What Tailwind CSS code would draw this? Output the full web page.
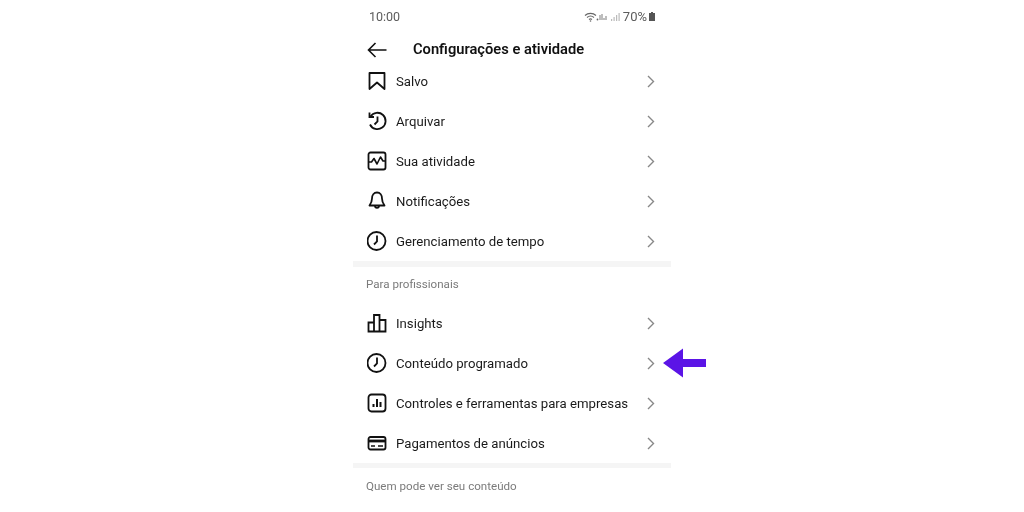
<!DOCTYPE html>
<html lang="en">
<head>
    <meta charset="UTF-8">
    <title>Configurações e atividade</title>
    <script src="https://cdn.jsdelivr.net/npm/@tailwindcss/browser@4"></script>
</head>
<body class="bg-white font-['Roboto',sans-serif] w-[1024px] h-[512px] overflow-hidden relative">
    <div class="w-[318px] ml-[353px] h-[512px] overflow-hidden text-[#1a1a1a] blur-[0.4px]">
        <!-- status bar -->
        <div class="h-[35px] pl-[16px] pr-[16px] flex items-center justify-between text-[#5c5c5c]">
            <span class="text-[12.5px] pb-[1px]">10:00</span>
            <div class="flex items-center gap-[2px] pb-[2px]">
                <svg width="24" height="10" viewBox="0 0 24 10" fill="none" stroke="#666">
                    <path d="M1 3.500C4 .7 9 .7 12 3.500M3 5.500c2-1.700 5-1.700 7 0M5 7.500c1-.8 2-.8 3 0" stroke-width="1.100"/>
                    <circle cx="6.500" cy="9" r=".8" fill="#666" stroke="none"/>
                    <circle cx="13.500" cy="7.500" r=".9" fill="#666" stroke="none"/>
                    <path d="M16 3v5M18 2v6M20 6v2M22 4v4" stroke-width="1.100" stroke="#888"/>
                </svg>
                <svg width="11" height="10" viewBox="0 0 11 10" fill="#bbb"><rect x="1" y="7" width="1.200" height="2"/><rect x="3.500" y="5" width="1.200" height="4"/><rect x="6" y="3" width="1.200" height="6"/><rect x="8.500" y="1" width="1.200" height="8"/></svg>
                <span class="text-[13px] leading-none">70%</span>
                <svg width="6" height="9" viewBox="0 0 6 9" fill="#555"><path d="M2 0h2v1h2v8H0V1h2z"/></svg>
            </div>
        </div>
        <!-- header -->
        <div class="h-[26px] pt-[3px] pl-[14px] flex items-center">
            <svg width="20" height="16" viewBox="0 0 20 16" fill="none" stroke="#111" stroke-width="1.600"><path d="M19.500 8H1.500M8.500 1l-7 7 7 7"/></svg>
            <h1 class="ml-[26px] text-[14.7px] font-semibold text-[#111]">Configurações e atividade</h1>
        </div>
        <!-- list -->
        <div class="flex flex-col">
            <div class="h-[40px] flex items-center pl-[14px] pr-[16px]">
                <svg class="w-[20px] h-[20px]" viewBox="0 0 20 20" fill="none" stroke="#111" stroke-width="1.800" stroke-linejoin="round"><path d="M2.500 2h15v16L10 11.500 2.500 18z"/></svg>
                <span class="ml-[9px] flex-1 pt-[2px] text-[13.2px]">Salvo</span>
                <svg width="8" height="13" viewBox="0 0 8 13" fill="none" stroke="#888" stroke-width="1.400"><path d="M1 1l5.500 5.500L1 12"/></svg>
            </div>
            <div class="h-[40px] flex items-center pl-[14px] pr-[16px]">
                <svg class="w-[20px] h-[20px]" viewBox="0 0 20 20" fill="none" stroke="#111" stroke-width="1.800"><path d="M3.500 5.500A8.200 8.200 0 1 1 3 13.500"/><path d="M2.500 1.500v4.500H7"/><path d="M10.500 5.500v5l-3 3"/></svg>
                <span class="ml-[9px] flex-1 pt-[2px] text-[13.2px]">Arquivar</span>
                <svg width="8" height="13" viewBox="0 0 8 13" fill="none" stroke="#888" stroke-width="1.400"><path d="M1 1l5.500 5.500L1 12"/></svg>
            </div>
            <div class="h-[40px] flex items-center pl-[14px] pr-[16px]">
                <svg class="w-[20px] h-[20px]" viewBox="0 0 20 20" fill="none" stroke="#111" stroke-width="1.800" stroke-linejoin="round"><rect x="1.500" y="1.500" width="17" height="17" rx="2"/><path d="M1.500 11h3l2.500-3.500 3 5.500 3.500-7 2.500 4h2" stroke-width="1.600"/></svg>
                <span class="ml-[9px] flex-1 pt-[2px] text-[13.2px]">Sua atividade</span>
                <svg width="8" height="13" viewBox="0 0 8 13" fill="none" stroke="#888" stroke-width="1.400"><path d="M1 1l5.500 5.500L1 12"/></svg>
            </div>
            <div class="h-[40px] flex items-center pl-[14px] pr-[16px]">
                <svg class="w-[20px] h-[20px]" viewBox="0 0 20 20" fill="none" stroke="#111" stroke-width="1.800" stroke-linejoin="round"><path d="M10 1.500c-3.200 0-5 2.700-5 6 0 3-.8 4.700-2.500 7h15c-1.700-2.300-2.500-4-2.500-7 0-3.300-1.800-6-5-6z"/><path d="M8 14.800a2 2 0 0 0 4 0"/></svg>
                <span class="ml-[9px] flex-1 pt-[2px] text-[13.2px]">Notificações</span>
                <svg width="8" height="13" viewBox="0 0 8 13" fill="none" stroke="#888" stroke-width="1.400"><path d="M1 1l5.500 5.500L1 12"/></svg>
            </div>
            <div class="h-[40px] flex items-center pl-[14px] pr-[16px]">
                <svg class="w-[20px] h-[20px]" viewBox="0 0 20 20" fill="none" stroke="#111" stroke-width="1.800"><circle cx="9.500" cy="10" r="9"/><path d="M10 4.500v6l-3 3"/></svg>
                <span class="ml-[9px] flex-1 pt-[2px] text-[13.2px]">Gerenciamento de tempo</span>
                <svg width="8" height="13" viewBox="0 0 8 13" fill="none" stroke="#888" stroke-width="1.400"><path d="M1 1l5.500 5.500L1 12"/></svg>
            </div>
        </div>
        <div class="h-[6px] bg-[#f5f5f5]"></div>
        <div class="h-[36px] pl-[13px] flex items-center text-[11.6px] text-[#7b7b7b]">Para profissionais</div>
        <div class="flex flex-col">
            <div class="h-[40px] flex items-center pl-[14px] pr-[16px]">
                <svg class="w-[20px] h-[20px]" viewBox="0 0 20 20" fill="none" stroke="#111" stroke-width="1.800"><path d="M1.500 18.500v-9h5.500v9zM7 18.500V2h5.500v16.500zM12.500 18.500V7h6v11.500z"/></svg>
                <span class="ml-[9px] flex-1 pt-[2px] text-[13.2px]">Insights</span>
                <svg width="8" height="13" viewBox="0 0 8 13" fill="none" stroke="#888" stroke-width="1.400"><path d="M1 1l5.500 5.500L1 12"/></svg>
            </div>
            <div class="h-[40px] flex items-center pl-[14px] pr-[16px]">
                <svg class="w-[20px] h-[20px]" viewBox="0 0 20 20" fill="none" stroke="#111" stroke-width="1.800"><circle cx="9.500" cy="10" r="9"/><path d="M10 4.500v6l-3 3"/></svg>
                <span class="ml-[9px] flex-1 pt-[2px] text-[13.2px]">Conteúdo programado</span>
                <svg width="8" height="13" viewBox="0 0 8 13" fill="none" stroke="#888" stroke-width="1.400"><path d="M1 1l5.500 5.500L1 12"/></svg>
            </div>
            <div class="h-[40px] flex items-center pl-[14px] pr-[16px]">
                <svg class="w-[20px] h-[20px]" viewBox="0 0 20 20" fill="none" stroke="#111" stroke-width="1.800"><rect x="1.500" y="1.500" width="17" height="17" rx="3"/><path d="M6.500 11v3M10 6v8M13.500 9v5" stroke-width="2"/></svg>
                <span class="ml-[9px] flex-1 pt-[2px] text-[13.2px]">Controles e ferramentas para empresas</span>
                <svg width="8" height="13" viewBox="0 0 8 13" fill="none" stroke="#888" stroke-width="1.400"><path d="M1 1l5.500 5.500L1 12"/></svg>
            </div>
            <div class="h-[40px] flex items-center pl-[14px] pr-[16px]">
                <svg class="w-[20px] h-[20px]" viewBox="0 0 20 20" fill="none" stroke="#111" stroke-width="1.800"><rect x="1.500" y="4" width="17" height="12.500" rx="2"/><path d="M1.500 8h17" stroke-width="2.800"/><path d="M4 13h4M11 13h5" stroke-width="1.600"/></svg>
                <span class="ml-[9px] flex-1 pt-[2px] text-[13.2px]">Pagamentos de anúncios</span>
                <svg width="8" height="13" viewBox="0 0 8 13" fill="none" stroke="#888" stroke-width="1.400"><path d="M1 1l5.500 5.500L1 12"/></svg>
            </div>
        </div>
        <div class="h-[5px] bg-[#f5f5f5]"></div>
        <div class="h-[36px] pl-[13px] pt-[2px] flex items-center text-[11.6px] text-[#7b7b7b]">Quem pode ver seu conteúdo</div>
    </div>
    <!-- callout arrow over the screenshot -->
    <svg class="absolute left-[662px] top-[348px]" width="44" height="30" viewBox="0 0 44 30" fill="#5b14e6"><path d="M1 15L21 .5V11h23v8H21v10.500z"/></svg>
</body>
</html>
